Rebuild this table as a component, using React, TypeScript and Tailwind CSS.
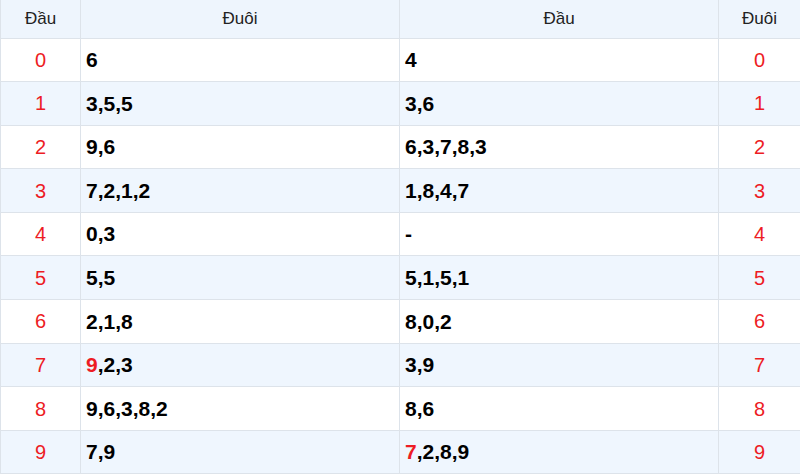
import React from "react"

type Row = { head: number; left: string; right: string; hlLeft?: boolean; hlRight?: boolean }

const rows: Row[] = [
    { head: 0, left: "6", right: "4" },
    { head: 1, left: "3,5,5", right: "3,6" },
    { head: 2, left: "9,6", right: "6,3,7,8,3" },
    { head: 3, left: "7,2,1,2", right: "1,8,4,7" },
    { head: 4, left: "0,3", right: "-" },
    { head: 5, left: "5,5", right: "5,1,5,1" },
    { head: 6, left: "2,1,8", right: "8,0,2" },
    { head: 7, left: "9,2,3", right: "3,9", hlLeft: true },
    { head: 8, left: "9,6,3,8,2", right: "8,6" },
    { head: 9, left: "7,9", right: "7,2,8,9", hlRight: true },
]

const Nums = ({ text, hl }: { text: string; hl?: boolean }) => {
    if (!hl) return <>{text}</>
    return (
        <>
            <span className="text-[#ed1c24]">{text.slice(0, 1)}</span>
            {text.slice(1)}
        </>
    )
}

export default function App() {
    return (
        <div className="w-[800px] h-[475px] bg-white overflow-hidden" style={{ fontFamily: '"Liberation Sans", Arial, sans-serif' }}>
            <table className="w-full table-fixed border-collapse text-[#222]">
                <colgroup>
                    <col className="w-[80px]" />
                    <col className="w-[319px]" />
                    <col className="w-[319px]" />
                    <col className="w-[82px]" />
                </colgroup>
                <thead>
                    <tr className="h-[38px] bg-[#eef5fd] text-[17px] font-normal">
                        <th className="border-x border-b border-[#dde3ea] font-normal text-center">Đầu</th>
                        <th className="border-x border-b border-[#dde3ea] font-normal text-center">Đuôi</th>
                        <th className="border-x border-b border-[#dde3ea] font-normal text-center">Đầu</th>
                        <th className="border-x border-b border-[#dde3ea] font-normal text-center">Đuôi</th>
                    </tr>
                </thead>
                <tbody>
                    {rows.map((r, i) => (
                        <tr key={i} className={i % 2 === 1 ? "h-[43.6px] bg-[#eff6fe]" : "h-[43.6px] bg-white"}>
                            <td className="border border-[#dde3ea] text-center text-[20px] text-[#ed1c24]">{r.head}</td>
                            <td className="border border-[#dde3ea] px-[5px] text-[21px] font-bold text-black">
                                <Nums text={r.left} hl={r.hlLeft} />
                            </td>
                            <td className="border border-[#dde3ea] px-[5px] text-[21px] font-bold text-black">
                                <Nums text={r.right} hl={r.hlRight} />
                            </td>
                            <td className="border border-[#dde3ea] text-center text-[20px] text-[#ed1c24]">{r.head}</td>
                        </tr>
                    ))}
                </tbody>
            </table>
        </div>
    )
}
